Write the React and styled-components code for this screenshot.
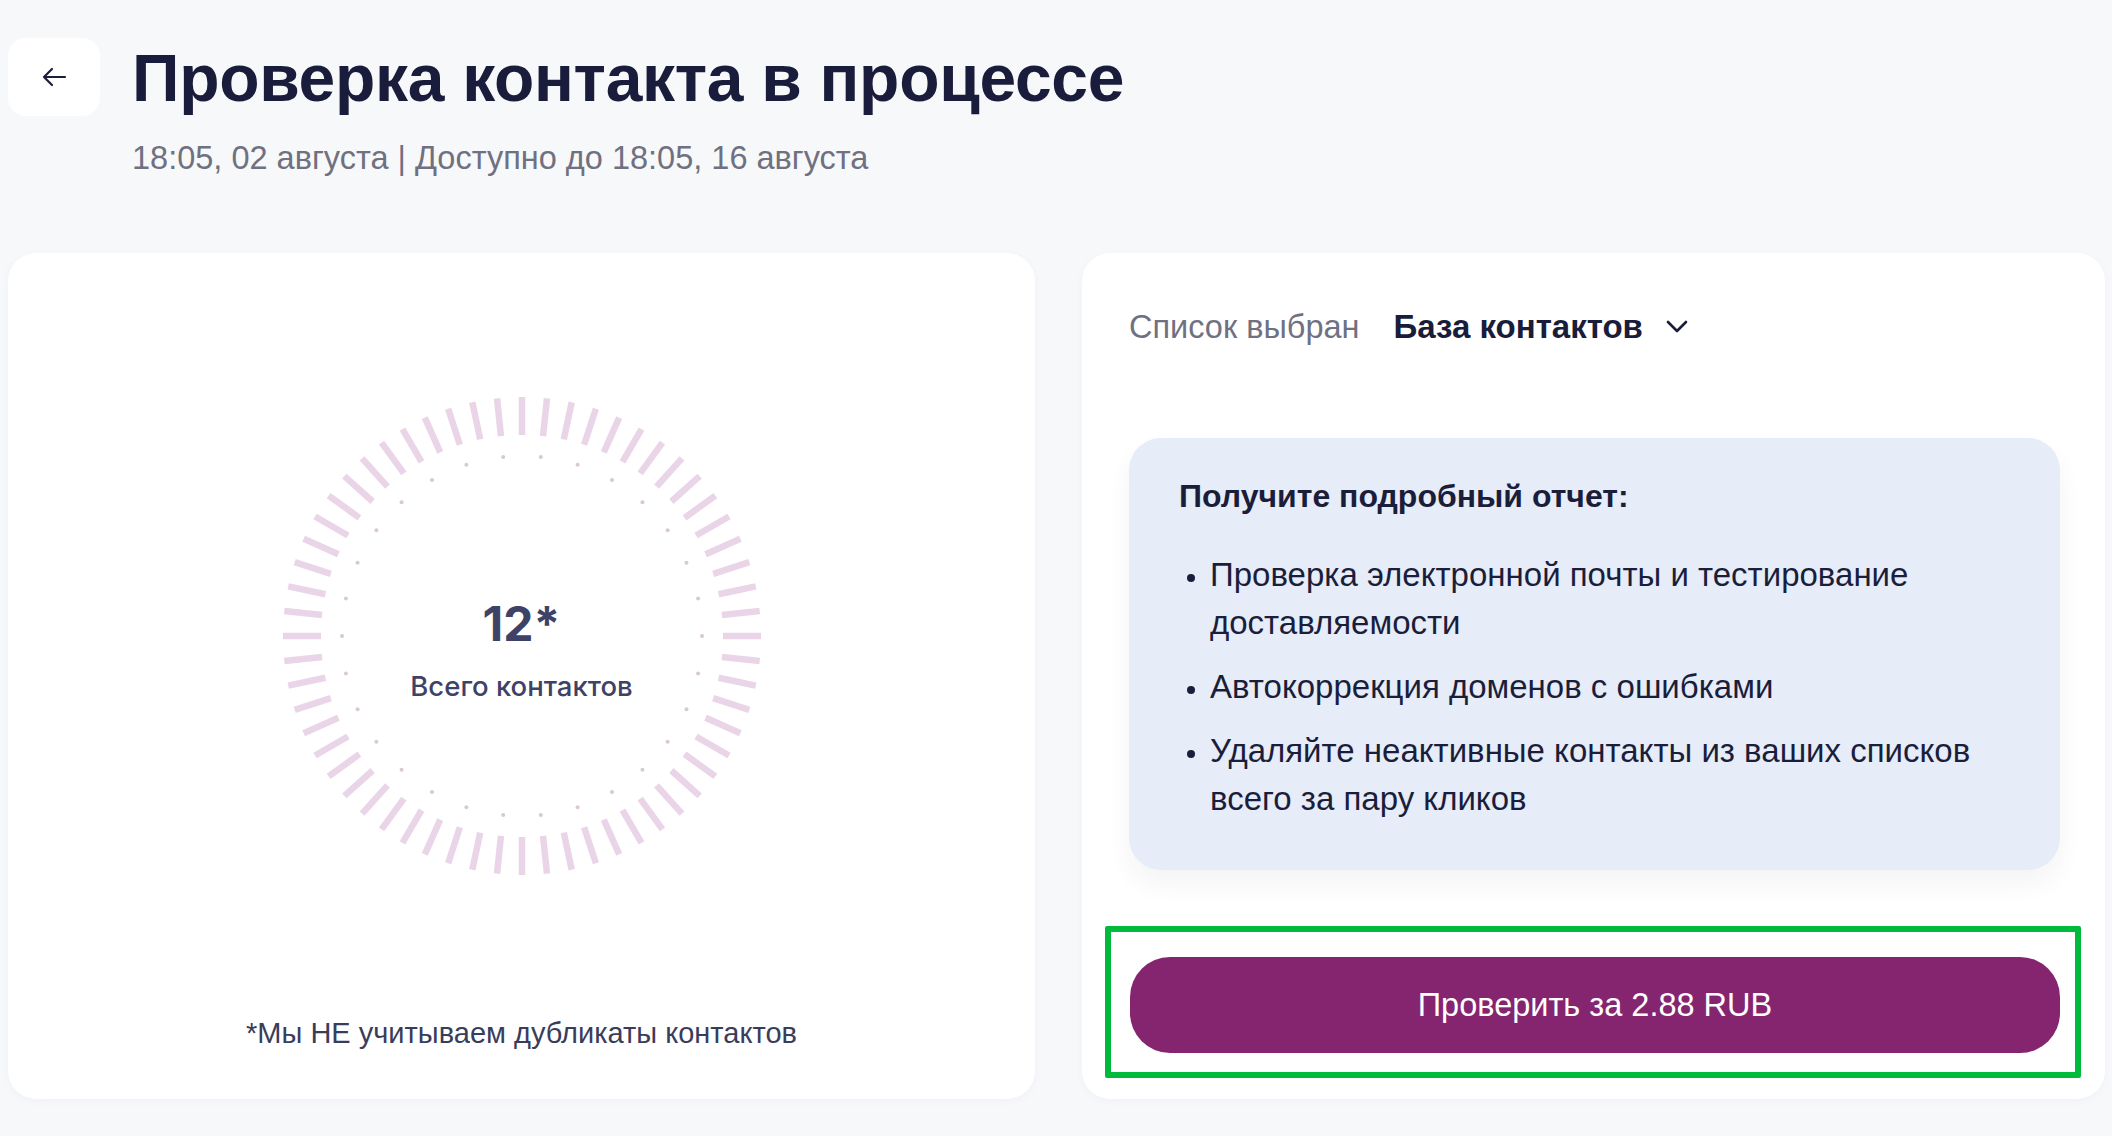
import React from "react";
import styled, { createGlobalStyle } from "styled-components";

const GlobalStyle = createGlobalStyle`
  html, body {
    margin: 0;
    padding: 0;
    background-color: #f7f8fa;
  }
  body {
    font-family: "Liberation Sans", Arial, sans-serif;
  }
`;

const Page = styled.div`
  display: flex;
  flex-direction: column;
  width: 2112px;
  height: 1136px;
  box-sizing: border-box;
  padding: 38px 7px 0 8px;
  overflow: hidden;
`;

const Header = styled.div`
  display: flex;
  align-items: flex-start;
`;

const BackButton = styled.button`
  display: flex;
  align-items: center;
  justify-content: center;
  width: 92px;
  height: 78px;
  margin-right: 32px;
  border: none;
  border-radius: 18px;
  background-color: #ffffff;
  color: #1b1e3b;
  cursor: pointer;
`;

const TitleBlock = styled.div`
  display: flex;
  flex-direction: column;
`;

const Title = styled.h1`
  margin: 0;
  font-size: 66px;
  line-height: 80px;
  font-weight: 700;
  color: #191c3a;
  letter-spacing: -0.3px;
`;

const Subtitle = styled.div`
  margin-top: 20px;
  font-size: 32.5px;
  line-height: 40px;
  color: #6f7080;
`;

const Cards = styled.div`
  display: grid;
  grid-template-columns: 1027px 1fr;
  gap: 47px;
  margin-top: 75px;
  height: 846px;
`;

const Card = styled.div`
  display: flex;
  flex-direction: column;
  box-sizing: border-box;
  background-color: #ffffff;
  border-radius: 28px;
  box-shadow: 0 2px 10px rgba(30, 40, 80, 0.03);
`;

const StatsCard = styled(Card)`
  align-items: center;
  padding: 143px 0 49px;
`;

const Dial = styled.div`
  display: grid;
  width: 480px;
  height: 480px;
  & > * {
    grid-area: 1 / 1;
  }
`;

const DialCenter = styled.div`
  display: flex;
  flex-direction: column;
  align-items: center;
  justify-content: center;
  padding-top: 26px;
  font-family: Inter, "Liberation Sans", sans-serif;
  color: #3d4266;
`;

const Count = styled.div`
  font-size: 48px;
  line-height: 56px;
  font-weight: 700;
`;

const CountLabel = styled.div`
  margin-top: 18px;
  font-size: 27.5px;
  line-height: 32px;
  font-weight: 500;
`;

const Footnote = styled.div`
  margin-top: auto;
  font-size: 29px;
  line-height: 34px;
  color: #3a3d5a;
`;

const OrderCard = styled(Card)`
  padding: 54px 45px 21px 47px;
`;

const ListRow = styled.div`
  display: flex;
  align-items: center;
  line-height: 40px;
`;

const ListLabel = styled.span`
  font-size: 32.5px;
  color: #6f7183;
  margin-right: 34px;
`;

const ListValue = styled.span`
  display: flex;
  align-items: center;
  gap: 22px;
  font-size: 33px;
  font-weight: 700;
  color: #191c3a;
`;

const InfoBox = styled.div`
  margin-top: 91px;
  height: 432px;
  box-sizing: border-box;
  padding: 38px 50px 0;
  background-color: #e6ecf8;
  border-radius: 32px;
  box-shadow: 0 14px 26px rgba(30, 40, 80, 0.05);
  color: #1b1e3b;
`;

const InfoTitle = styled.div`
  font-size: 32px;
  line-height: 40px;
  font-weight: 700;
`;

const Bullets = styled.ul`
  margin: 35px 0 0;
  padding: 0 0 0 31px;
  font-size: 33px;
  line-height: 48px;
  li {
    margin-bottom: 16px;
    padding-left: 0;
  }
  li::marker {
    font-size: 26px;
  }
`;

const ButtonFrame = styled.div`
  margin: auto -21px 0 -24px;
  padding: 25px 15px 19px 19px;
  border: 6px solid #00bb3b;
  border-radius: 2px;
`;

const PayButton = styled.button`
  display: block;
  width: 100%;
  height: 96px;
  border: none;
  border-radius: 40px;
  background-color: #852570;
  color: #ffffff;
  font-family: "Liberation Sans", Arial, sans-serif;
  font-size: 32.5px;
  cursor: pointer;
`;

function ArrowLeft() {
  return (
    <svg width="26" height="22" viewBox="0 0 26 22" fill="none">
      <path
        d="M24 11H3M11 3L3 11L11 19"
        stroke="currentColor"
        strokeWidth="2.2"
        strokeLinecap="round"
        strokeLinejoin="round"
      />
    </svg>
  );
}

function Chevron() {
  return (
    <svg width="24" height="16" viewBox="0 0 24 16" fill="none">
      <path
        d="M3 3L12 12L21 3"
        stroke="#191c3a"
        strokeWidth="2.6"
        strokeLinecap="round"
        strokeLinejoin="round"
      />
    </svg>
  );
}

function DialRing() {
  const c = 240;
  const ticks = Array.from({ length: 60 }, (_, i) => {
    const a = (i * 6 * Math.PI) / 180;
    const s = Math.sin(a);
    const k = Math.cos(a);
    return (
      <line
        key={"t" + i}
        x1={c + 201 * s}
        y1={c - 201 * k}
        x2={c + 239 * s}
        y2={c - 239 * k}
        stroke="#e9d5e7"
        strokeWidth="6.5"
      />
    );
  });
  const dots = Array.from({ length: 30 }, (_, i) => {
    const a = ((i * 12 + 6) * Math.PI) / 180;
    return (
      <circle
        key={"d" + i}
        cx={c + 180 * Math.sin(a)}
        cy={c - 180 * Math.cos(a)}
        r="2"
        fill="#dac8d8"
      />
    );
  });
  return (
    <svg width="480" height="480" viewBox="0 0 480 480">
      {ticks}
      {dots}
    </svg>
  );
}

export default function App() {
  return (
    <>
      <GlobalStyle />
      <Page>
        <Header>
          <BackButton aria-label="Назад">
            <ArrowLeft />
          </BackButton>
          <TitleBlock>
            <Title>Проверка контакта в процессе</Title>
            <Subtitle>18:05, 02 августа | Доступно до 18:05, 16 августа</Subtitle>
          </TitleBlock>
        </Header>

        <Cards>
          <StatsCard>
            <Dial>
              <DialRing />
              <DialCenter>
                <Count>12*</Count>
                <CountLabel>Всего контактов</CountLabel>
              </DialCenter>
            </Dial>
            <Footnote>*Мы НЕ учитываем дубликаты контактов</Footnote>
          </StatsCard>

          <OrderCard>
            <ListRow>
              <ListLabel>Список выбран</ListLabel>
              <ListValue>
                База контактов
                <Chevron />
              </ListValue>
            </ListRow>

            <InfoBox>
              <InfoTitle>Получите подробный отчет:</InfoTitle>
              <Bullets>
                <li>Проверка электронной почты и тестирование доставляемости</li>
                <li>Автокоррекция доменов с ошибками</li>
                <li>Удаляйте неактивные контакты из ваших списков всего за пару кликов</li>
              </Bullets>
            </InfoBox>

            <ButtonFrame>
              <PayButton>Проверить за 2.88 RUB</PayButton>
            </ButtonFrame>
          </OrderCard>
        </Cards>
      </Page>
    </>
  );
}
